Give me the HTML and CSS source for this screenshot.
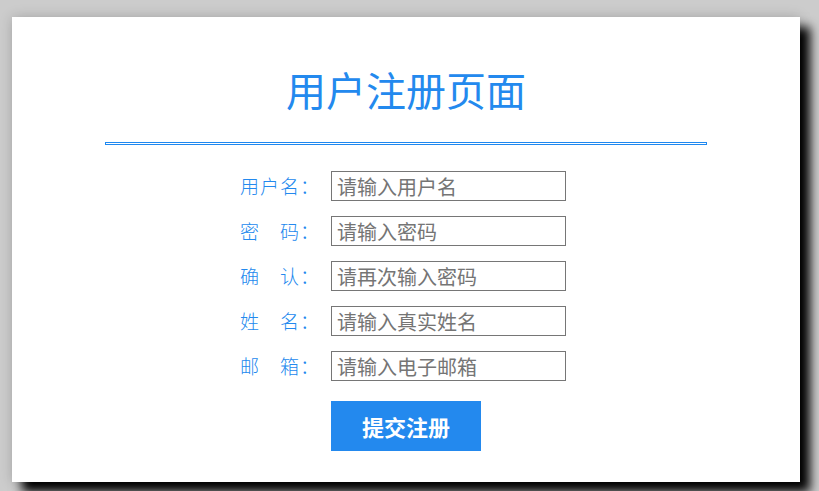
FILE: index.html
```html
<!DOCTYPE html>
<html lang="zh-CN">
<head>
<meta charset="utf-8">
<title>用户注册页面</title>
<link rel="stylesheet" href="styles.css">
</head>
<body>
<div class="card">
  <h1 class="title">用户注册页面</h1>
  <div class="rule"></div>
  <form class="form">
    <div class="row"><label class="label">用户名：</label><input class="field" type="text" placeholder="请输入用户名"></div>
    <div class="row"><label class="label">密　码：</label><input class="field" type="password" placeholder="请输入密码"></div>
    <div class="row"><label class="label">确　认：</label><input class="field" type="password" placeholder="请再次输入密码"></div>
    <div class="row"><label class="label">姓　名：</label><input class="field" type="text" placeholder="请输入真实姓名"></div>
    <div class="row"><label class="label">邮　箱：</label><input class="field" type="text" placeholder="请输入电子邮箱"></div>
    <div class="actions"><button class="submit" type="button">提交注册</button></div>
  </form>
</div>
</body>
</html>
```
FILE: styles.css
```css
html, body {
  margin: 0;
  padding: 0;
}
body {
  background: #cccccc;
  padding: 17px 0 0 12px;
  font-family: "Noto Sans CJK SC", "Noto Sans", sans-serif;
  height: 491px;
  box-sizing: border-box;
  overflow: hidden;
}
.card {
  width: 788px;
  height: 465px;
  background: #ffffff;
  box-shadow: 10px 10px 10px #000000, 0 0 12px rgba(0, 0, 0, 0.18);
  padding-top: 48px;
  box-sizing: border-box;
}
.title {
  margin: 0;
  text-align: center;
  font-size: 40px;
  line-height: 48px;
  font-weight: 400;
  color: #2389ee;
}
.rule {
  width: 600px;
  height: 1px;
  border: 1px solid #1e88f0;
  margin: 29px auto 0;
}
.form {
  margin: 26px 0 0 228px;
  display: flex;
  flex-direction: column;
  gap: 15px;
}
.row {
  display: flex;
  align-items: center;
  height: 30px;
}
.label {
  width: 91px;
  font-size: 19px;
  letter-spacing: 1px;
  color: #2389ee;
  font-weight: 300;
  line-height: 30px;
}
.field {
  width: 235px;
  height: 30px;
  box-sizing: border-box;
  border: 1px solid #767676;
  padding: 0 5px;
  font-family: "Noto Sans CJK SC", sans-serif;
  font-size: 20px;
  color: #333;
  outline: none;
}
.field::placeholder {
  color: #757575;
}
.actions {
  padding-left: 91px;
  margin-top: 5px;
}
.submit {
  width: 150px;
  height: 50px;
  border: none;
  background: #2389ee;
  color: #ffffff;
  font-family: "Noto Sans CJK SC", sans-serif;
  font-size: 22px;
  font-weight: 700;
  padding: 0;
}
```
